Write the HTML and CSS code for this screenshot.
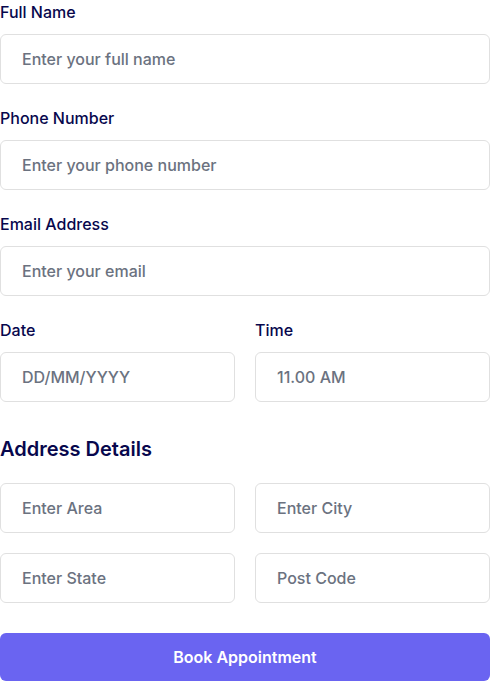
FILE: index.html
```html
<!DOCTYPE html>
<html>
<head>
<meta charset="utf-8">
<link rel="stylesheet" href="styles.css">
</head>
<body>
<form class="form">
  <div class="field">
    <label class="label">Full Name</label>
    <input class="input" type="text" placeholder="Enter your full name">
  </div>
  <div class="field">
    <label class="label">Phone Number</label>
    <input class="input" type="text" placeholder="Enter your phone number">
  </div>
  <div class="field">
    <label class="label">Email Address</label>
    <input class="input" type="text" placeholder="Enter your email">
  </div>
  <div class="row">
    <div class="field">
      <label class="label">Date</label>
      <input class="input" type="text" placeholder="DD/MM/YYYY">
    </div>
    <div class="field">
      <label class="label">Time</label>
      <input class="input" type="text" placeholder="11.00 AM">
    </div>
  </div>
  <h2 class="heading">Address Details</h2>
  <div class="grid">
    <input class="input" type="text" placeholder="Enter Area">
    <input class="input" type="text" placeholder="Enter City">
    <input class="input" type="text" placeholder="Enter State">
    <input class="input" type="text" placeholder="Post Code">
  </div>
  <button class="button" type="button">Book Appointment</button>
</form>
</body>
</html>
```
FILE: styles.css
```css
* { box-sizing: border-box; }
html, body {
  margin: 0;
  padding: 0;
  background: #ffffff;
  font-family: Inter, "Noto Sans", sans-serif;
}
.form {
  width: 490px;
  display: flex;
  flex-direction: column;
}
.field {
  display: flex;
  flex-direction: column;
  margin-bottom: 22px;
}
.label {
  display: block;
  font-size: 16px;
  line-height: 24px;
  font-weight: 500;
  color: #07074D;
  margin-bottom: 10px;
}
.input {
  display: block;
  width: 100%;
  height: 50px;
  border: 1px solid #e0e0e0;
  border-radius: 6px;
  background: #ffffff;
  padding: 0 21px;
  font-family: Inter, "Noto Sans", sans-serif;
  font-size: 16px;
  font-weight: 500;
  color: #6B7280;
  outline: none;
}
.input::placeholder {
  color: #6B7280;
  opacity: 1;
}
.row {
  display: grid;
  grid-template-columns: 1fr 1fr;
  column-gap: 20px;
}
.heading {
  margin: 11px 0 20px 0;
  font-size: 20px;
  line-height: 28px;
  font-weight: 600;
  color: #07074D;
}
.grid {
  display: grid;
  grid-template-columns: 1fr 1fr;
  gap: 20px;
  margin-bottom: 30px;
}
.button {
  display: block;
  width: 100%;
  height: 48px;
  border: none;
  border-radius: 6px;
  background: #6A64F1;
  color: #ffffff;
  font-family: Inter, "Noto Sans", sans-serif;
  font-size: 16px;
  font-weight: 600;
  cursor: pointer;
}
```
